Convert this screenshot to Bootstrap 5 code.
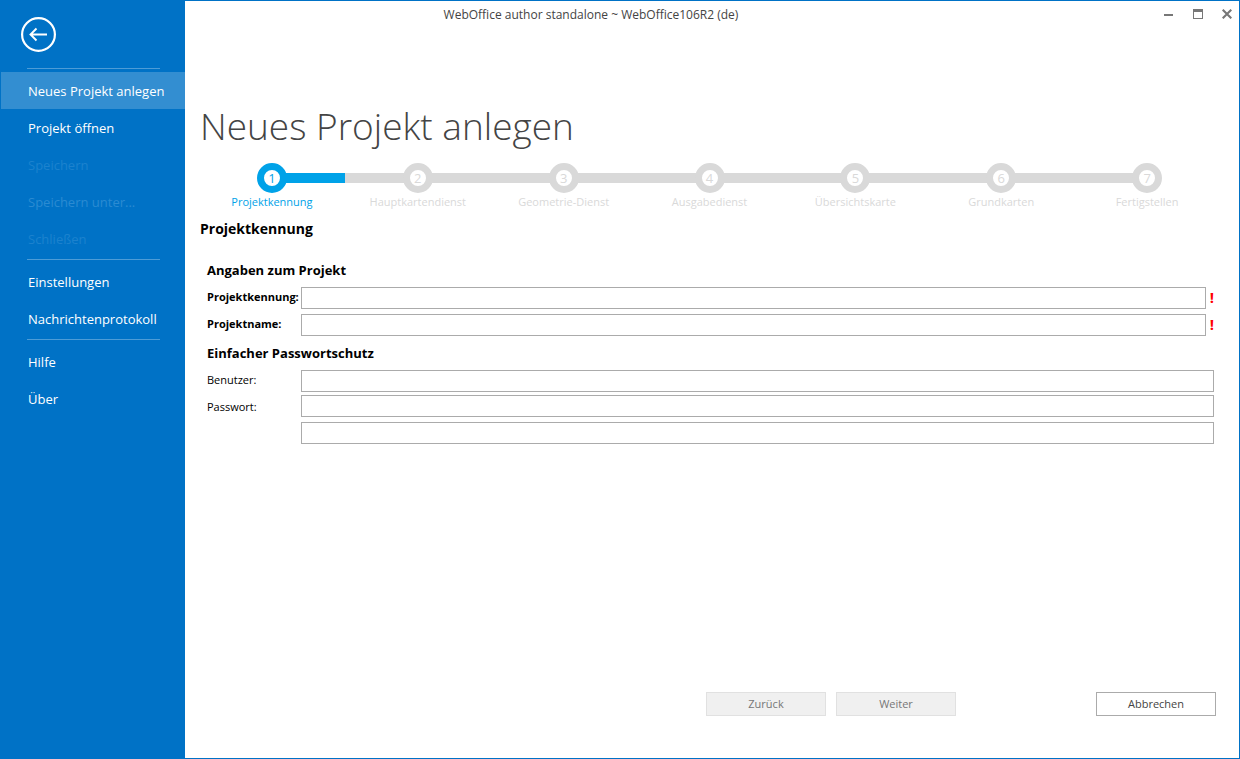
<!DOCTYPE html>
<html lang="de">
<head>
<meta charset="utf-8">
<meta name="viewport" content="width=device-width, initial-scale=1">
<title>WebOffice author standalone ~ WebOffice106R2 (de)</title>
<link href="https://cdn.jsdelivr.net/npm/bootstrap@5.3.0/dist/css/bootstrap.min.css" rel="stylesheet">
<style>
  :root { --wo-blue: #0072c6; --wo-accent: #00a2e8; --wo-idle: #d9d9d9; }
  body { font-family: "Open Sans", "Noto Sans", sans-serif; font-size: 12px; line-height: 20px; color: #000; background: #fff; border: 1px solid var(--wo-blue); }
  .side { flex: 0 0 184px; background: var(--wo-blue); padding-top: 16px; }
  .back { width: 35px; height: 35px; margin: 0 0 16px 20px; color: #fff; }
  .side hr { margin: 2px 25px 3px 26px; border-top: 1px solid #4d9cd7; opacity: 1; }
  .side hr.first { margin-top: 0; }
  .side .nav-link { padding: 2px 0 0 27px; font-size: 13px; line-height: 35px; color: #fff; white-space: nowrap; text-align: left; }
  .side .nav-link.active { background: #338ed1; }
  .side .nav-link:disabled { color: #2b8bd2; opacity: 1; }
  .side .nav-link.faint:disabled { color: #1c82ce; opacity: 1; }
  .titlebar { height: 28px; color: #444; }
  .titlebar .caption { padding-right: 160px; }
  .winbtn { width: 24px; height: 26px; color: #777; }
  .winbtns { gap: 5px; }
  .page-title { font-size: 37px; line-height: 50px; font-weight: 300; color: #444; margin: 72px 0 0 15px; }
  .steps { margin: 12px 19px 0 14px; }
  .step { flex: 1 1 0; color: var(--wo-idle); text-align: center; white-space: nowrap; }
  .step .track { height: 30px; }
  .step .seg { flex: 1 1 0; height: 10px; background: currentColor; }
  .step .seg:first-child { margin-right: -3px; }
  .step .seg:last-child { margin-left: -3px; }
  .step .dot { width: 30px; height: 30px; border: 7px solid currentColor; border-radius: 50%; font-size: 13px; line-height: 16px; }
  .step:first-child .seg:first-child, .step:last-child .seg:last-child { background: transparent; }
  .step.current { color: var(--wo-accent); }
  .step-label { font-size: 11px; line-height: 18px; }
  .pane-title { font-size: 14px; line-height: 20px; font-weight: 700; margin: 8px 0 0 15px; }
  .fields { margin: 21px 25px 0 22px; }
  .fields h3 { font-size: 13px; line-height: 20px; font-weight: 700; margin: 0 0 7px; }
  .fields .field + h3 { margin-top: 7px; }
  .fields .field { margin-bottom: 5px; }
  .fields .field.tight { margin-bottom: 3px; }
  .fields label, .fields .indent { flex: 0 0 94px; font-size: 11px; line-height: 20px; white-space: nowrap; }
  .fields label.low { line-height: 24px; }
  .fields .form-control { height: 22px; min-height: 0; padding: 0 4px; font-size: 12px; border: 1px solid #ababab; border-radius: 0; }
  .fields .required { flex: 0 0 8px; font-size: 15px; line-height: 20px; font-weight: 700; color: #f00; text-align: right; }
  .actions { padding: 0 23px 42px; gap: 10px; }
  .actions .btn { width: 120px; height: 24px; padding: 0; font-size: 11px; line-height: 20px; border-radius: 0; color: #444; background: #fff; border: 1px solid #ababab; }
  .actions .btn:disabled { color: #777; background: #f0f0f0; border-color: #e1e1e1; opacity: 1; }
  .actions .btn.cancel { margin-left: 130px; }
</style>
</head>
<body class="d-flex min-vh-100">
  <nav class="side" aria-label="Datei">
    <button type="button" class="btn back p-0 border-0 d-block" aria-label="Zurück zum Projekt">
      <svg class="d-block" width="35" height="35" viewBox="0 0 35 35" fill="none" stroke="currentColor"><circle cx="17.500" cy="17.500" r="16.400" stroke-width="2.200"/><path d="M26 17.500H10M15.500 11.500l-6 6 6 6" stroke-width="1.900"/></svg>
    </button>
    <hr class="first">
    <div class="nav flex-column">
      <a class="nav-link active" href="#" aria-current="page">Neues Projekt anlegen</a>
      <a class="nav-link" href="#">Projekt öffnen</a>
      <button type="button" class="nav-link border-0 bg-transparent faint" disabled>Speichern</button>
      <button type="button" class="nav-link border-0 bg-transparent" disabled>Speichern unter...</button>
      <button type="button" class="nav-link border-0 bg-transparent faint" disabled>Schließen</button>
    </div>
    <hr>
    <div class="nav flex-column">
      <a class="nav-link" href="#">Einstellungen</a>
      <a class="nav-link" href="#">Nachrichtenprotokoll</a>
    </div>
    <hr>
    <div class="nav flex-column">
      <a class="nav-link" href="#">Hilfe</a>
      <a class="nav-link" href="#">Über</a>
    </div>
  </nav>

  <main class="d-flex flex-column flex-grow-1">
    <header class="titlebar d-flex">
      <div class="caption flex-grow-1 text-center align-self-center">WebOffice author standalone ~ WebOffice106R2 (de)</div>
      <div class="winbtns d-flex">
        <button type="button" class="btn winbtn p-0 border-0 d-flex align-items-center justify-content-center" aria-label="Minimieren"><svg width="10" height="10" viewBox="0 0 10 10"><path d="M0 5h9v2H0z" fill="currentColor"/></svg></button>
        <button type="button" class="btn winbtn p-0 border-0 d-flex align-items-center justify-content-center" aria-label="Maximieren"><svg width="10" height="10" viewBox="0 0 10 10"><path d="M0 0h10v10H0zM1 3v6h8V3z" fill="currentColor" fill-rule="evenodd"/></svg></button>
        <button type="button" class="btn winbtn p-0 border-0 d-flex align-items-center justify-content-center" aria-label="Schließen"><svg width="10" height="10" viewBox="0 0 10 10"><path d="M.7.700l8.600 8.600M9.300.700L.7 9.300" stroke="currentColor" stroke-width="2.100"/></svg></button>
      </div>
    </header>

    <h1 class="page-title">Neues Projekt anlegen</h1>

    <div class="steps d-flex">
      <div class="step current"><div class="track d-flex align-items-center"><span class="seg"></span><span class="dot">1</span><span class="seg"></span></div><div class="step-label">Projektkennung</div></div>
      <div class="step"><div class="track d-flex align-items-center"><span class="seg"></span><span class="dot">2</span><span class="seg"></span></div><div class="step-label">Hauptkartendienst</div></div>
      <div class="step"><div class="track d-flex align-items-center"><span class="seg"></span><span class="dot">3</span><span class="seg"></span></div><div class="step-label">Geometrie-Dienst</div></div>
      <div class="step"><div class="track d-flex align-items-center"><span class="seg"></span><span class="dot">4</span><span class="seg"></span></div><div class="step-label">Ausgabedienst</div></div>
      <div class="step"><div class="track d-flex align-items-center"><span class="seg"></span><span class="dot">5</span><span class="seg"></span></div><div class="step-label">Übersichtskarte</div></div>
      <div class="step"><div class="track d-flex align-items-center"><span class="seg"></span><span class="dot">6</span><span class="seg"></span></div><div class="step-label">Grundkarten</div></div>
      <div class="step"><div class="track d-flex align-items-center"><span class="seg"></span><span class="dot">7</span><span class="seg"></span></div><div class="step-label">Fertigstellen</div></div>
    </div>

    <h2 class="pane-title">Projektkennung</h2>

    <form class="d-flex flex-column flex-grow-1">
      <div class="fields">
        <h3>Angaben zum Projekt</h3>
        <div class="field d-flex">
          <label class="fw-bold" for="kennung">Projektkennung:</label>
          <input class="form-control flex-grow-1" type="text" id="kennung" required>
          <span class="required">!</span>
        </div>
        <div class="field d-flex">
          <label class="fw-bold" for="name">Projektname:</label>
          <input class="form-control flex-grow-1" type="text" id="name" required>
          <span class="required">!</span>
        </div>
        <h3>Einfacher Passwortschutz</h3>
        <div class="field tight d-flex">
          <label for="benutzer">Benutzer:</label>
          <input class="form-control flex-grow-1" type="text" id="benutzer">
        </div>
        <div class="field tight d-flex">
          <label class="low" for="passwort" id="passwort-label">Passwort:</label>
          <input class="form-control flex-grow-1" type="password" id="passwort">
        </div>
        <div class="field d-flex">
          <span class="indent"></span>
          <input class="form-control flex-grow-1" type="password" id="passwort2" aria-labelledby="passwort-label">
        </div>
      </div>
      <div class="actions d-flex justify-content-end mt-auto">
        <button type="button" class="btn" disabled>Zurück</button>
        <button type="button" class="btn" disabled>Weiter</button>
        <button type="button" class="btn cancel">Abbrechen</button>
      </div>
    </form>
  </main>
<script src="https://cdn.jsdelivr.net/npm/bootstrap@5.3.0/dist/js/bootstrap.bundle.min.js"></script>
</body>
</html>
